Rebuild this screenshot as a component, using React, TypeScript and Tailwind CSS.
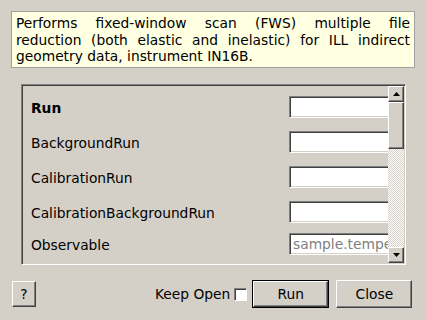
import React from "react";

const FONT = { fontFamily: '"DejaVu Sans", Verdana, sans-serif' };

const RAISED =
  "bg-[#d4d0c8] border-t border-l border-t-white border-l-white border-b border-r border-b-[#404040] border-r-[#404040] shadow-[inset_-1px_-1px_0_#808080]";

const SUNKEN =
  "bg-white border-t border-l border-t-[#808080] border-l-[#808080] border-b border-r border-b-white border-r-white shadow-[inset_1px_1px_0_#404040,inset_-1px_-1px_0_#d4d0c8]";

type Row = { label: string; bold?: boolean; placeholder?: string; gap: string };

const ROWS: Row[] = [
  { label: "Run", bold: true, gap: "mt-[11px]" },
  { label: "BackgroundRun", gap: "mt-[13px]" },
  { label: "CalibrationRun", gap: "mt-[13px]" },
  { label: "CalibrationBackgroundRun", gap: "mt-[13px]" },
  { label: "Observable", placeholder: "sample.temperature", gap: "mt-[10px]" },
];

const Arrow = ({ down }: { down?: boolean }) => (
  <svg width="7" height="4" viewBox="0 0 7 4">
    {down ? <polygon points="0,0 7,0 3.5,4" fill="#000" /> : <polygon points="0,4 7,4 3.5,0" fill="#000" />}
  </svg>
);

export default function App() {
  return (
    <div className="w-[426px] h-[320px] bg-[#d4d0c8] overflow-hidden flex flex-col text-[13.8px] text-black" style={FONT}>
      <div className="mt-[11px] mx-[11px] h-[57px] bg-[#ffffe1] border border-[#a0a0a0] px-[4px] pt-[3px] leading-[16.5px] whitespace-nowrap">
        <div className="[text-align-last:justify]">Performs fixed-window scan (FWS) multiple file</div>
        <div className="[text-align-last:justify]">reduction (both elastic and inelastic) for ILL indirect</div>
        <div>geometry data, instrument IN16B.</div>
      </div>

      <div className="mt-[16px] ml-[21px] w-[385px] h-[181px] flex border-t border-l border-t-[#808080] border-l-[#808080] border-b border-r border-b-white border-r-white shadow-[inset_1px_1px_0_#404040]">
        <div className="flex-1 overflow-hidden pl-[9px]">
          {ROWS.map((r) => (
            <div key={r.label} className={`flex items-center h-[22px] ${r.gap}`}>
              <span className={`w-[258px] shrink-0 pt-[2px] ${r.bold ? "font-bold" : ""}`}>{r.label}</span>
              <div className={`w-[120px] h-[22px] shrink-0 ${SUNKEN} pl-[3px] flex items-center text-[#808080] whitespace-nowrap overflow-hidden`}>
                {r.placeholder}
              </div>
            </div>
          ))}
        </div>
        <div className="w-[16px] mt-[1px] mb-[1px] mr-[1px] flex flex-col">
          <div className={`h-[16px] ${RAISED} flex items-center justify-center`}>
            <Arrow />
          </div>
          <div className={`h-[47px] ${RAISED}`} />
          <div className="flex-1 bg-[repeating-conic-gradient(#d4d0c8_0_25%,#ffffff_0_50%)] bg-[length:2px_2px]" />
          <div className={`h-[16px] ${RAISED} flex items-center justify-center`}>
            <Arrow down />
          </div>
        </div>
      </div>

      <div className="mt-[15px] flex items-center h-[28px]">
        <button className={`ml-[12px] w-[24px] h-[26px] ${RAISED} flex items-center justify-center`}>?</button>
        <span className="ml-[119px]">Keep Open</span>
        <span className="ml-[4px] w-[13px] h-[13px] bg-white border-t border-l border-t-[#808080] border-l-[#808080] border-b border-r border-b-white border-r-white shadow-[inset_1px_1px_0_#404040]" />
        <div className="ml-[5px] w-[77px] h-[28px] border border-black">
          <button className={`w-full h-full ${RAISED} flex items-center justify-center`}>Run</button>
        </div>
        <button className={`ml-[7px] w-[76px] h-[28px] ${RAISED} flex items-center justify-center`}>Close</button>
      </div>
    </div>
  );
}
